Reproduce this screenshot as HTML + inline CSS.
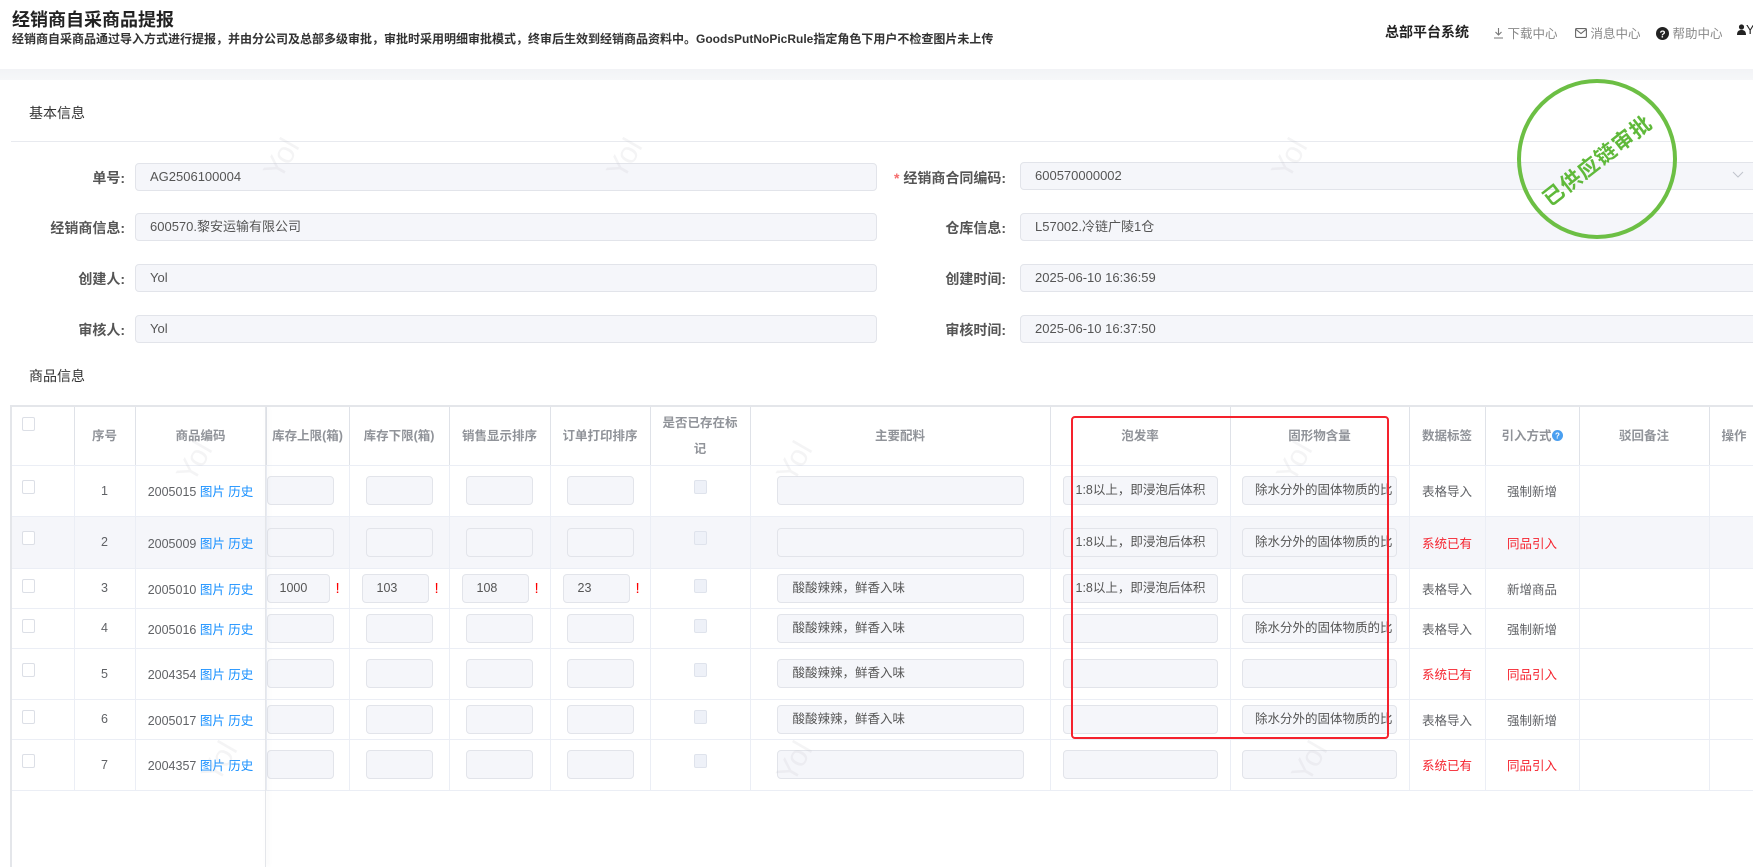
<!DOCTYPE html>
<html><head><meta charset="utf-8">
<style>
*{box-sizing:border-box;margin:0;padding:0}
html,body{width:1753px;height:867px;overflow:hidden;background:#fff;font-family:"Liberation Sans","Noto Sans CJK SC",sans-serif;color:#606266}
.abs{position:absolute}
.title{left:12px;top:6px;font-size:18px;font-weight:bold;color:#222}
.sub{left:12px;top:30px;font-size:12px;font-weight:bold;color:#333}
.nav{top:23px;font-size:12.5px;color:#888;white-space:nowrap}
.band{left:0;top:69px;width:1753px;height:11px;background:linear-gradient(#f2f3f6,#f6f7f9)}
.sec{font-size:14px;color:#333}
.hl{left:11px;top:141px;width:1742px;height:1px;background:#e8eaef}
.lab{font-size:14px;color:#555;font-weight:bold;text-align:right;width:200px}
.inp{background:#f5f6fa;border:1px solid #e2e4ea;border-radius:4px;height:28px;font-size:13px;line-height:26px;padding-left:14px;color:#555}
table{position:absolute;left:11px;top:405px;border-collapse:collapse;table-layout:fixed;width:1822px}
td,th{border-right:1px solid #ebeef5;border-bottom:1px solid #ebeef5;font-size:12.5px;text-align:center;vertical-align:middle;color:#606266;white-space:nowrap;overflow:hidden}
th{color:#909399;font-weight:bold;height:59px;line-height:32px;border-right:1px solid #dfe2e8;border-top:2px solid #e4e6ea}
tr.g td{background:#f5f6fa}
.cb{display:inline-block;width:13px;height:14px;border:1px solid #dcdfe6;border-radius:2px;background:#fff}
.cb2{display:inline-block;width:13px;height:14px;border:1px solid #dfe3ec;border-radius:2px;background:#eef1f8}
td.c0{vertical-align:top;padding-top:14px}
td.cL,th.cL{text-align:left;padding-left:11px}
.ti{display:inline-block;height:29px;background:#f5f6fa;border:1px solid #e2e4ea;border-radius:4px;vertical-align:middle;text-align:left;padding-left:14px;line-height:27px;font-size:12.5px;color:#555;overflow:hidden;white-space:nowrap}
.w67{width:67px}.w247{width:247px;padding-left:15px}.w155{width:155px;padding-left:12px}
.lk{color:#1890ff}
.red{color:#f5222d}
.ex{color:#f00;font-size:15px;margin-left:6px;vertical-align:middle}
.wm{position:absolute;color:rgba(200,200,205,.2);font-size:30px;transform:rotate(-60deg);font-family:"Liberation Sans",sans-serif}
</style></head><body>
<div class="abs title">经销商自采商品提报</div>
<div class="abs sub">经销商自采商品通过导入方式进行提报，并由分公司及总部多级审批，审批时采用明细审批模式，终审后生效到经销商品资料中。GoodsPutNoPicRule指定角色下用户不检查图片未上传</div>
<div class="abs nav" style="left:1385px;top:22px;font-size:14px;font-weight:bold;color:#222">总部平台系统</div>
<div class="abs nav" style="left:1493px">
<svg width="11" height="12" viewBox="0 0 11 12" style="vertical-align:-1px"><path d="M5.5 1v7M2.5 5l3 3 3-3M1 11h9" stroke="#777" fill="none" stroke-width="1.1"/></svg> 下载中心</div>
<div class="abs nav" style="left:1575px">
<svg width="12" height="10" viewBox="0 0 12 10" style="vertical-align:0"><rect x="0.6" y="0.6" width="10.8" height="8.8" rx="1" stroke="#666" fill="none" stroke-width="1.1"/><path d="M1 1.5l5 4 5-4" stroke="#666" fill="none" stroke-width="1.1"/></svg> 消息中心</div>
<div class="abs nav" style="left:1656px">
<svg width="13" height="13" viewBox="0 0 13 13" style="vertical-align:-2px"><circle cx="6.5" cy="6.5" r="6.5" fill="#222"/><text x="6.5" y="10.3" font-size="10" font-weight="bold" fill="#fff" text-anchor="middle" font-family="Liberation Sans">?</text></svg> 帮助中心</div>
<div class="abs nav" style="left:1737px;color:#222">
<svg width="9" height="11" viewBox="0 0 9 11" style="vertical-align:-1px"><circle cx="4.5" cy="3" r="2.6" fill="#222"/><path d="M0 11c0-4 2-5 4.5-5S9 7 9 11z" fill="#222"/></svg>Yol</div>

<div class="abs band"></div>
<div class="abs sec" style="left:29px;top:103px">基本信息</div>
<div class="abs hl"></div>

<div class="abs lab" style="left:-75px;top:168px">单号:</div>
<div class="abs inp" style="left:135px;top:163px;width:742px">AG2506100004</div>
<div class="abs lab" style="left:-75px;top:218px">经销商信息:</div>
<div class="abs inp" style="left:135px;top:213px;width:742px">600570.黎安运输有限公司</div>
<div class="abs lab" style="left:-75px;top:269px">创建人:</div>
<div class="abs inp" style="left:135px;top:264px;width:742px">Yol</div>
<div class="abs lab" style="left:-75px;top:320px">审核人:</div>
<div class="abs inp" style="left:135px;top:315px;width:742px">Yol</div>

<div class="abs lab" style="left:806px;top:168px"><span style="color:#f56c6c">*</span> 经销商合同编码:</div>
<div class="abs inp" style="left:1020px;top:162px;width:760px">600570000002</div>
<svg class="abs" style="left:1732px;top:171px" width="12" height="8" viewBox="0 0 12 8"><path d="M1 1l5 5 5-5" stroke="#c0c4cc" fill="none"/></svg>
<div class="abs lab" style="left:806px;top:218px">仓库信息:</div>
<div class="abs inp" style="left:1020px;top:213px;width:760px">L57002.冷链广陵1仓</div>
<div class="abs lab" style="left:806px;top:269px">创建时间:</div>
<div class="abs inp" style="left:1020px;top:264px;width:760px">2025-06-10 16:36:59</div>
<div class="abs lab" style="left:806px;top:320px">审核时间:</div>
<div class="abs inp" style="left:1020px;top:315px;width:760px">2025-06-10 16:37:50</div>

<div class="abs" style="left:1517px;top:79px;width:160px;height:160px;border:4px solid #6cbf44;border-radius:50%"></div>
<div class="abs" style="left:1517px;top:145px;width:160px;text-align:center;font-size:21px;font-weight:bold;color:#5fb93a;transform:rotate(-38deg);letter-spacing:1px">已供应链审批</div>

<div class="abs sec" style="left:29px;top:366px">商品信息</div>

<table>
<colgroup><col style="width:63px"><col style="width:61px"><col style="width:131px"><col style="width:83px"><col style="width:100px"><col style="width:101px"><col style="width:100px"><col style="width:100px"><col style="width:300px"><col style="width:180px"><col style="width:179px"><col style="width:76px"><col style="width:94px"><col style="width:130px"><col style="width:124px"></colgroup>
<tr><th class="cL" style="vertical-align:top;padding-top:4px"><span class="cb"></span></th><th>序号</th><th>商品编码</th><th>库存上限(箱)</th><th>库存下限(箱)</th><th>销售显示排序</th><th>订单打印排序</th><th style="line-height:26px;white-space:normal;padding:0 10px">是否已存在标记</th><th>主要配料</th><th>泡发率</th><th>固形物含量</th><th>数据标签</th><th>引入方式<svg width="11" height="11" viewBox="0 0 11 11" style="vertical-align:-1px"><circle cx="5.5" cy="5.5" r="5.5" fill="#4a9ff0"/><text x="5.5" y="8.6" font-size="8" fill="#fff" text-anchor="middle" font-weight="bold" font-family="Liberation Sans">?</text></svg></th><th>驳回备注</th><th style="text-align:left;padding-left:12px">操作</th></tr>

<tr style="height:51px"><td class="c0 cL"><span class="cb"></span></td><td>1</td><td>2005015 <span class="lk">图片 历史</span></td><td style="text-align:left"><span class="ti w67"></span></td><td><span class="ti w67"></span></td><td><span class="ti w67"></span></td><td><span class="ti w67"></span></td><td class="c0"><span class="cb2"></span></td><td><span class="ti w247"></span></td><td><span class="ti w155">1:8以上，即浸泡后体积</span></td><td><span class="ti w155">除水分外的固体物质的比</span></td><td>表格导入</td><td>强制新增</td><td></td><td></td></tr>

<tr class="g" style="height:52px"><td class="c0 cL"><span class="cb"></span></td><td>2</td><td>2005009 <span class="lk">图片 历史</span></td><td style="text-align:left"><span class="ti w67"></span></td><td><span class="ti w67"></span></td><td><span class="ti w67"></span></td><td><span class="ti w67"></span></td><td class="c0"><span class="cb2"></span></td><td><span class="ti w247"></span></td><td><span class="ti w155">1:8以上，即浸泡后体积</span></td><td><span class="ti w155">除水分外的固体物质的比</span></td><td class="red">系统已有</td><td class="red">同品引入</td><td></td><td></td></tr>

<tr style="height:40px"><td class="c0 cL" style="padding-top:10px"><span class="cb"></span></td><td>3</td><td>2005010 <span class="lk">图片 历史</span></td><td style="text-align:left"><span class="ti" style="width:63px;padding-left:12px">1000</span><span class="ex">!</span></td><td style="text-align:left;padding-left:12px"><span class="ti" style="width:67px;padding-left:14px">103</span><span class="ex">!</span></td><td style="text-align:left;padding-left:12px"><span class="ti" style="width:67px;padding-left:14px">108</span><span class="ex">!</span></td><td style="text-align:left;padding-left:12px"><span class="ti" style="width:67px;padding-left:14px">23</span><span class="ex">!</span></td><td class="c0" style="padding-top:10px"><span class="cb2"></span></td><td><span class="ti w247">酸酸辣辣，鲜香入味</span></td><td><span class="ti w155">1:8以上，即浸泡后体积</span></td><td><span class="ti w155"></span></td><td>表格导入</td><td>新增商品</td><td></td><td></td></tr>

<tr style="height:40px"><td class="c0 cL" style="padding-top:10px"><span class="cb"></span></td><td>4</td><td>2005016 <span class="lk">图片 历史</span></td><td style="text-align:left"><span class="ti w67"></span></td><td><span class="ti w67"></span></td><td><span class="ti w67"></span></td><td><span class="ti w67"></span></td><td class="c0" style="padding-top:10px"><span class="cb2"></span></td><td><span class="ti w247">酸酸辣辣，鲜香入味</span></td><td><span class="ti w155"></span></td><td><span class="ti w155">除水分外的固体物质的比</span></td><td>表格导入</td><td>强制新增</td><td></td><td></td></tr>

<tr style="height:51px"><td class="c0 cL"><span class="cb"></span></td><td>5</td><td>2004354 <span class="lk">图片 历史</span></td><td style="text-align:left"><span class="ti w67"></span></td><td><span class="ti w67"></span></td><td><span class="ti w67"></span></td><td><span class="ti w67"></span></td><td class="c0"><span class="cb2"></span></td><td><span class="ti w247">酸酸辣辣，鲜香入味</span></td><td><span class="ti w155"></span></td><td><span class="ti w155"></span></td><td class="red">系统已有</td><td class="red">同品引入</td><td></td><td></td></tr>

<tr style="height:40px"><td class="c0 cL" style="padding-top:10px"><span class="cb"></span></td><td>6</td><td>2005017 <span class="lk">图片 历史</span></td><td style="text-align:left"><span class="ti w67"></span></td><td><span class="ti w67"></span></td><td><span class="ti w67"></span></td><td><span class="ti w67"></span></td><td class="c0" style="padding-top:10px"><span class="cb2"></span></td><td><span class="ti w247">酸酸辣辣，鲜香入味</span></td><td><span class="ti w155"></span></td><td><span class="ti w155">除水分外的固体物质的比</span></td><td>表格导入</td><td>强制新增</td><td></td><td></td></tr>

<tr style="height:51px"><td class="c0 cL"><span class="cb"></span></td><td>7</td><td>2004357 <span class="lk">图片 历史</span></td><td style="text-align:left"><span class="ti w67"></span></td><td><span class="ti w67"></span></td><td><span class="ti w67"></span></td><td><span class="ti w67"></span></td><td class="c0"><span class="cb2"></span></td><td><span class="ti w247"></span></td><td><span class="ti w155"></span></td><td><span class="ti w155"></span></td><td class="red">系统已有</td><td class="red">同品引入</td><td></td><td></td></tr>
</table>

<div class="abs" style="left:10px;top:405px;width:2px;height:462px;background:#e4e6ea"></div>
<div class="abs" style="left:265px;top:407px;width:1px;height:460px;background:#e4e6ea;box-shadow:2px 0 5px rgba(0,0,0,.08)"></div>

<div class="abs" style="left:1071px;top:416px;width:318px;height:323px;border:2.5px solid #f5222d;border-radius:4px"></div>

<div class="wm" style="left:262px;top:142px">Yol</div>
<div class="wm" style="left:605px;top:142px">Yol</div>
<div class="wm" style="left:1270px;top:142px">Yol</div>
<div class="wm" style="left:175px;top:445px">Yol</div>
<div class="wm" style="left:775px;top:445px">Yol</div>
<div class="wm" style="left:1275px;top:445px">Yol</div>
<div class="wm" style="left:200px;top:745px">Yol</div>
<div class="wm" style="left:775px;top:745px">Yol</div>
<div class="wm" style="left:1290px;top:745px">Yol</div>
</body></html>
